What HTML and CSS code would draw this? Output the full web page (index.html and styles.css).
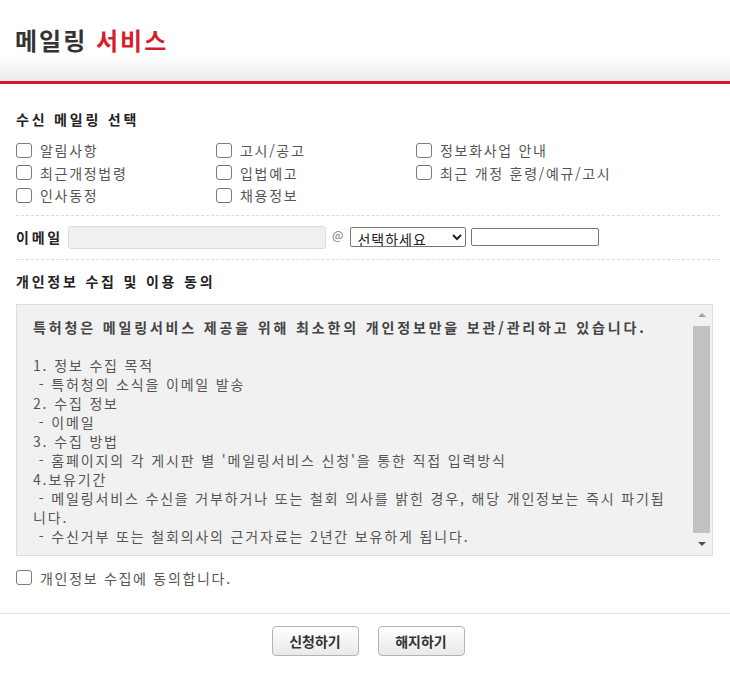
FILE: index.html
```html
<!DOCTYPE html>
<html lang="ko">
<head>
<meta charset="utf-8">
<title>메일링 서비스</title>
<link rel="stylesheet" href="styles.css">
</head>
<body>
<header class="page-header">
  <h1 class="title">메일링 <span class="title-accent">서비스</span></h1>
</header>
<main class="content">
  <h2 class="sec-title sec-first">수신 메일링 선택</h2>
  <div class="check-grid">
    <label class="check"><input type="checkbox" class="cb"><span>알림사항</span></label>
    <label class="check"><input type="checkbox" class="cb"><span>고시/공고</span></label>
    <label class="check"><input type="checkbox" class="cb"><span>정보화사업 안내</span></label>
    <label class="check"><input type="checkbox" class="cb"><span>최근개정법령</span></label>
    <label class="check"><input type="checkbox" class="cb"><span>입법예고</span></label>
    <label class="check"><input type="checkbox" class="cb"><span>최근 개정 훈령/예규/고시</span></label>
    <label class="check"><input type="checkbox" class="cb"><span>인사동정</span></label>
    <label class="check"><input type="checkbox" class="cb"><span>채용정보</span></label>
  </div>
  <div class="email-row">
    <span class="email-label">이메일</span>
    <input type="text" class="email-id">
    <span class="at">@</span>
    <select class="domain-select"><option>선택하세요</option></select>
    <input type="text" class="domain-input">
  </div>
  <h2 class="sec-title sec-second">개인정보 수집 및 이용 동의</h2>
  <div class="terms">
    <div class="terms-text"><strong class="terms-lead">특허청은 메일링서비스 제공을 위해 최소한의 개인정보만을 보관/관리하고 있습니다.</strong>

1. 정보 수집 목적
 - 특허청의 소식을 이메일 발송
2. 수집 정보
 - 이메일
3. 수집 방법
 - 홈페이지의 각 게시판 별 '메일링서비스 신청'을 통한 직접 입력방식
4.보유기간
 - 메일링서비스 수신을 거부하거나 또는 철회 의사를 밝힌 경우, 해당 개인정보는 즉시 파기됩
니다.
 - 수신거부 또는 철회의사의 근거자료는 2년간 보유하게 됩니다.</div>
    <div class="scrollbar">
      <div class="sb-btn"><span class="arrow-up"></span></div>
      <div class="sb-thumb"></div>
      <div class="sb-btn sb-btn-down"><span class="arrow-down"></span></div>
    </div>
  </div>
  <label class="check agree"><input type="checkbox" class="cb"><span>개인정보 수집에 동의합니다.</span></label>
</main>
<footer class="actions">
  <button class="btn" type="button">신청하기</button>
  <button class="btn" type="button">해지하기</button>
</footer>
</body>
</html>
```
FILE: styles.css
```css
* { box-sizing: border-box; }
html, body { margin: 0; padding: 0; background: #fff; }
body {
  font-family: "Noto Sans CJK KR", "Noto Sans", sans-serif;
  font-size: 14px;
  color: #555;
  width: 730px;
}
.page-header {
  height: 84px;
  border-bottom: 3px solid #d8142d;
  background: linear-gradient(#ffffff 0%, #ffffff 66%, #ececec 100%);
  padding: 24px 0 0 15px;
}
.title {
  margin: 0;
  font-size: 24px;
  line-height: 32px;
  font-weight: 700;
  color: #333;
  letter-spacing: 2px;
}
.title-accent { color: #d61f2c; }
.content { padding: 0 10px 0 16px; }
.sec-title {
  margin: 0;
  font-size: 14px;
  line-height: 20px;
  font-weight: 700;
  color: #222;
  letter-spacing: 2.8px;
}
.sec-first { margin-top: 25px; }
.sec-second { margin-top: 11px; }
.check-grid {
  margin-top: 10px;
  display: grid;
  grid-template-columns: 200px 200px 200px;
  grid-auto-rows: 22.5px;
  padding-bottom: 8px;
  border-bottom: 1px dashed #dcdcdc;
}
.check {
  display: flex;
  align-items: center;
  letter-spacing: 1.7px;
  color: #555;
  line-height: 20px;
}
.cb {
  appearance: none;
  -webkit-appearance: none;
  width: 16px;
  height: 15px;
  margin: 0 8px 0 0;
  border: 1px solid #7a7a7a;
  border-radius: 3px;
  background: #fff;
  flex: none;
}
.email-row {
  display: flex;
  align-items: center;
  padding: 10px 0;
  border-bottom: 1px dashed #dcdcdc;
}
.email-label {
  font-weight: 700;
  color: #222;
  letter-spacing: 2.8px;
  line-height: 23px;
}
.email-id {
  margin-left: 5px;
  width: 258px;
  height: 23px;
  border: 1px solid #dcdcdc;
  border-radius: 3px;
  background: #f0f0f0;
}
.at {
  margin-left: 6px;
  font-size: 12px;
  color: #777;
  align-self: flex-start;
  line-height: 18px;
}
.domain-select {
  margin-left: 7px;
  width: 116px;
  height: 20px;
  border: 1px solid #767676;
  border-radius: 2px;
  background: #fff;
  color: #222;
  font-family: "Noto Sans CJK KR", sans-serif;
  font-size: 14px;
  letter-spacing: 1px;
  padding: 0 2px;
}
.domain-input {
  margin-left: 5px;
  width: 128px;
  height: 18px;
  border: 1px solid #767676;
  border-radius: 2px;
  background: #fff;
}
.terms {
  margin-top: 13px;
  width: 697px;
  height: 252px;
  display: flex;
  border: 1px solid #dcdcdc;
  background: #f1f1f1;
}
.terms-text {
  flex: 1;
  padding: 13px 0 0 16px;
  white-space: pre;
  line-height: 19px;
  letter-spacing: 1.85px;
  color: #555;
}
.terms-lead {
  font-weight: 700;
  color: #444;
  letter-spacing: 2.85px;
}
.scrollbar {
  width: 17px;
  margin-right: 2px;
  display: flex;
  flex-direction: column;
}
.sb-btn {
  height: 21px;
  display: flex;
  justify-content: center;
  align-items: center;
}
.sb-btn-down { height: 22px; }
.arrow-up {
  width: 0; height: 0;
  border-left: 4px solid transparent;
  border-right: 4px solid transparent;
  border-bottom: 4px solid #a3a3a3;
}
.arrow-down {
  width: 0; height: 0;
  border-left: 4px solid transparent;
  border-right: 4px solid transparent;
  border-top: 4px solid #505050;
}
.sb-thumb {
  flex: 1;
  background: #c1c1c1;
}
.agree { margin-top: 12px; }
.actions {
  margin-top: 25px;
  border-top: 1px solid #e3e3e3;
  padding: 12px 10px 0 16px;
  display: flex;
  justify-content: center;
  gap: 19px;
}
.btn {
  width: 87px;
  height: 30px;
  border: 1px solid #b4b4b4;
  border-radius: 4px;
  background: linear-gradient(#ffffff, #e9e9e9);
  font-family: "Noto Sans CJK KR", sans-serif;
  font-size: 14px;
  font-weight: 700;
  color: #333;
  padding: 0;
}
```
